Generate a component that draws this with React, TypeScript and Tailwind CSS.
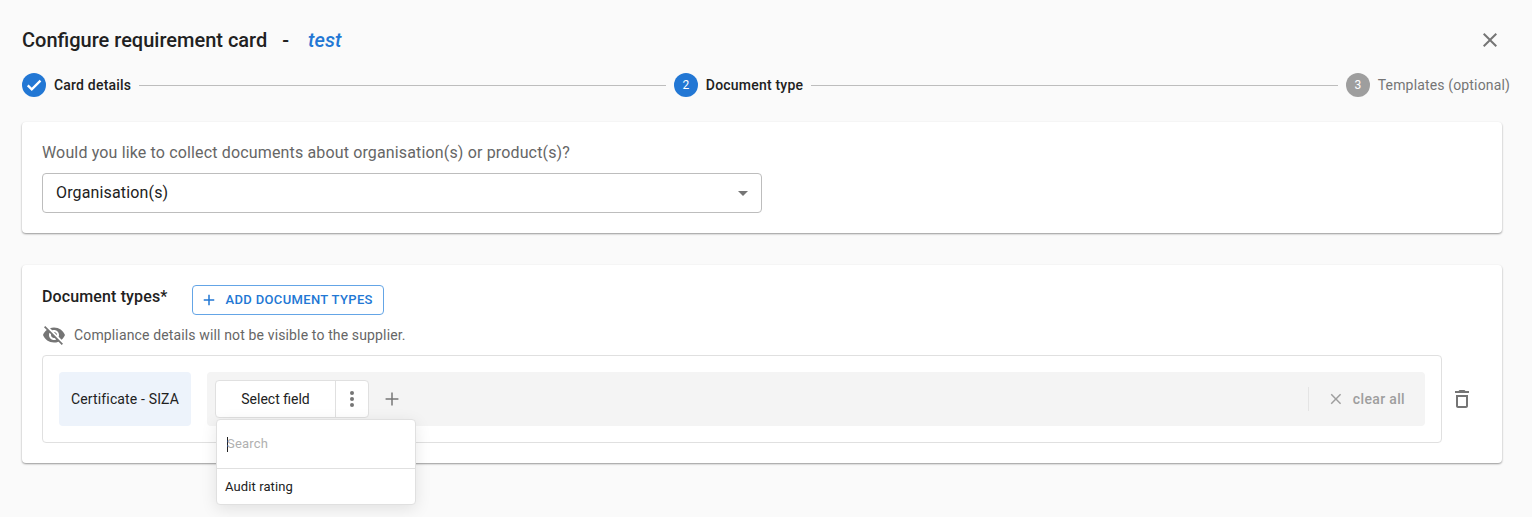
const font = { fontFamily: "Roboto, sans-serif" };

function StepCircle({ children, gray }: { children: React.ReactNode; gray?: boolean }) {
  return (
    <span className={`flex h-6 w-6 shrink-0 items-center justify-center rounded-full text-xs text-white ${gray ? "bg-[#9e9e9e]" : "bg-[#2277d4]"}`}>
      {children}
    </span>
  );
}

function Line() {
  return <div className="h-px flex-1 bg-[#bdbdbd] mx-2" />;
}

export default function App() {
  return (
    <div style={font} className="relative h-[517px] w-[1532px] overflow-hidden bg-[#fafafa] pl-[22px] pr-[22px] text-[#212121]">
      <div className="flex h-[73px] items-center pt-[7px]">
        <span className="text-[20px] font-medium leading-none">Configure requirement card</span>
        <span className="ml-[15px] text-[20px] font-medium leading-none">-</span>
        <span className="ml-[19px] text-[20px] font-medium italic leading-none text-[#2277d4]">test</span>
        <button className="ml-auto mr-[8px] flex h-6 w-6 items-center justify-center text-[#757575]">
          <svg viewBox="0 0 24 24" width="24" height="24" fill="currentColor">
            <path d="M19 6.41 17.59 5 12 10.59 6.41 5 5 6.41 10.59 12 5 17.59 6.41 19 12 13.41 17.59 19 19 17.59 13.41 12z" />
          </svg>
        </button>
      </div>

      <div className="flex h-6 items-center">
        <StepCircle>
          <svg viewBox="0 0 24 24" width="20" height="20" fill="none" stroke="#fff" strokeWidth="2.8">
            <path d="M4.5 12.5l4.8 4.8L19.8 6.8" />
          </svg>
        </StepCircle>
        <span className="ml-2 text-sm font-medium tracking-[0.2px] whitespace-nowrap">Card details</span>
        <Line />
        <StepCircle>2</StepCircle>
        <span className="ml-2 text-sm font-medium tracking-[0.2px] whitespace-nowrap">Document type</span>
        <Line />
        <StepCircle gray>3</StepCircle>
        <span className="ml-2 text-sm tracking-[0.15px] whitespace-nowrap text-[#757575]">Templates (optional)</span>
      </div>

      <div className="mt-[25px] mr-[8px] h-[111px] rounded bg-white px-5 pt-[21px] shadow-[0_1px_2px_rgba(0,0,0,0.4)]">
        <p className="text-[16px] leading-5 tracking-[0.15px] text-[#666666]">Would you like to collect documents about organisation(s) or product(s)?</p>
        <div className="mt-[10px] flex h-10 w-[720px] items-center justify-between rounded border border-[#bdbdbd] pl-[13px] pr-[13px] text-[16px] tracking-[0.15px]">
          <span>Organisation(s)</span>
          <svg viewBox="0 0 10 5" width="10" height="5" fill="#757575">
            <path d="M0 0l5 5 5-5z" />
          </svg>
        </div>
      </div>

      <div className="mt-[32px] mr-[8px] h-[198px] rounded bg-white px-5 pt-[20px] shadow-[0_1px_2px_rgba(0,0,0,0.4)]">
        <div className="flex h-[30px] items-start">
          <span className="pt-[2px] text-[16px] font-medium leading-[20px] tracking-[0.13px]">Document types*</span>
          <button className="ml-6 flex h-[30px] w-[192px] items-center rounded border border-[#64a5e6] pl-[7px] text-[13px] font-medium tracking-[0.35px] text-[#2277d4]">
            <svg viewBox="0 0 24 24" width="18" height="18" fill="currentColor">
              <path d="M19 13h-6v6h-2v-6H5v-2h6V5h2v6h6v2z" />
            </svg>
            <span className="ml-[8px]">ADD DOCUMENT TYPES</span>
          </button>
        </div>

        <div className="mt-[8px] flex h-6 items-center text-[#666666]">
          <svg viewBox="0 0 24 24" width="24" height="24" fill="#757575">
            <path d="M12 7c2.76 0 5 2.24 5 5 0 .65-.13 1.26-.36 1.83l2.92 2.92c1.51-1.26 2.7-2.89 3.43-4.75-1.73-4.39-6-7.5-11-7.5-1.4 0-2.74.25-3.98.7l2.16 2.16C10.74 7.13 11.35 7 12 7zM2 4.27l2.28 2.28.46.46C3.08 8.3 1.78 10.02 1 12c1.73 4.39 6 7.5 11 7.5 1.55 0 3.03-.3 4.38-.84l.42.42L19.73 22 21 20.73 3.27 3 2 4.27zM7.53 9.8l1.55 1.55c-.05.21-.08.43-.08.65 0 1.66 1.34 3 3 3 .22 0 .44-.03.65-.08l1.55 1.55c-.67.33-1.41.53-2.2.53-2.76 0-5-2.24-5-5 0-.79.2-1.53.53-2.2zm4.31-.78l3.15 3.15.02-.16c0-1.66-1.34-3-3-3l-.17.01z" />
          </svg>
          <span className="ml-2 text-[14px] tracking-[0.14px]">Compliance details will not be visible to the supplier.</span>
        </div>

        <div className="mt-[8px] flex items-center">
          <div className="flex h-[88px] w-[1400px] items-center rounded border border-[#e0e0e0] pl-4 pr-4">
            <div className="flex h-[54px] w-[132px] items-center justify-center rounded bg-[#edf3fb] text-[14px] tracking-[0.15px]">
              Certificate - SIZA
            </div>
            <div className="relative ml-4 flex h-[54px] flex-1 items-center rounded bg-[#f4f4f4] pl-2 pr-[20px]">
              <div className="flex h-[38px] w-[154px] rounded border border-[#e0e0e0] bg-white">
                <div className="flex flex-1 items-center justify-center border-r border-[#e0e0e0] text-[14px]">
                  Select field
                </div>
                <div className="flex w-[32px] items-center justify-center">
                  <svg viewBox="0 0 4 18" width="4" height="18" fill="#757575">
                    <circle cx="2" cy="3" r="2" />
                    <circle cx="2" cy="9" r="2" />
                    <circle cx="2" cy="15" r="2" />
                  </svg>
                </div>
              </div>
              <svg className="ml-[12px]" viewBox="0 0 24 24" width="22" height="22" fill="#757575">
                <path d="M19 12.8h-6.2V19h-1.6v-6.2H5v-1.6h6.2V5h1.6v6.2H19z" />
              </svg>
              <div className="ml-auto flex h-[24px] w-[97px] items-center border-l border-[#e4e4e4] pl-[18px] text-[#9e9e9e]">
                <svg viewBox="0 0 24 24" width="18" height="18" fill="currentColor">
                  <path d="M19 6.41 17.59 5 12 10.59 6.41 5 5 6.41 10.59 12 5 17.59 6.41 19 12 13.41 17.59 19 19 17.59 13.41 12z" />
                </svg>
                <span className="ml-[8px] whitespace-nowrap text-[14px] font-medium tracking-[0.35px]">clear all</span>
              </div>

              <div className="absolute left-[9px] top-[47px] z-10 w-[200px] rounded border border-[#e0e0e0] bg-white shadow-[0_4px_16px_rgba(0,0,0,0.1)]">
                <div className="flex h-[49px] items-center border-b border-[#e0e0e0] pl-[10px] text-[13px] tracking-[0.2px] text-[#b0b0b0]">
                  <span className="h-[15px] w-px bg-[#212121]" />
                  <span className="-ml-px">Search</span>
                </div>
                <div className="flex h-[35px] items-center pl-2 text-[13px] tracking-[0.1px] text-[#212121]">Audit rating</div>
              </div>
            </div>
          </div>
          <svg className="ml-[8px]" viewBox="0 0 24 24" width="24" height="24" fill="#757575">
            <path d="M6 8v11c0 1.1.9 2 2 2h8c1.1 0 2-.9 2-2V8H6zm2 2h8v9H8v-9zM9.5 3l-1 1H5v2h14V4h-3.500l-1-1h-5z" />
          </svg>
        </div>
      </div>
    </div>
  );
}
